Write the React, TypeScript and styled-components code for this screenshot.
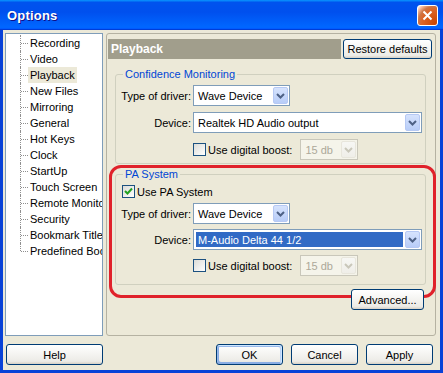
import * as React from 'react';
import styled, { createGlobalStyle } from 'styled-components';

const Global = createGlobalStyle`
  html, body {
    margin: 0;
    padding: 0;
    background: #fff;
  }
  body {
    font-family: "Liberation Sans", Arial, sans-serif;
    font-size: 11px;
    color: #000;
  }
`;

const Window = styled.div`
  width: 443px;
  height: 373px;
  display: flex;
  flex-direction: column;
  overflow: hidden;
`;

const TitleBar = styled.div`
  height: 30px;
  flex: none;
  display: flex;
  align-items: center;
  justify-content: space-between;
  padding: 0 5px 0 7px;
  box-sizing: border-box;
  background: linear-gradient(
    180deg,
    #0997ff,
    #0053ee 8%,
    #0050ee 40%,
    #0066ff 88%,
    #0066ff 93%,
    #005bff 95%,
    #003dd7 96%,
    #003dd7
  );
`;

const Title = styled.span`
  font-size: 13px;
  font-weight: bold;
  color: #fff;
  text-shadow: 1px 1px #0f1089;
  letter-spacing: 0.2px;
`;

const CloseButton = styled.div`
  width: 21px;
  height: 21px;
  box-sizing: border-box;
  border: 1px solid #fff;
  border-radius: 3px;
  display: flex;
  align-items: center;
  justify-content: center;
  background: radial-gradient(
    circle at 90% 90%,
    #cc4600 0,
    #dc6527 55%,
    #cd7546 70%,
    #ffccb2 90%,
    #fff 100%
  );
`;

const Frame = styled.div`
  flex: 1;
  display: flex;
  flex-direction: column;
  background: #ece9d8;
  border: 3px solid #0842d8;
  border-top: none;
`;

const MainRow = styled.div`
  display: flex;
  gap: 3px;
  height: 303px;
  padding: 3px 4px 0 2px;
`;

const Tree = styled.ul`
  width: 98px;
  box-sizing: border-box;
  margin: 0;
  padding: 1px 0 0 14px;
  list-style: none;
  background: #fff;
  border: 1px solid #7f9db9;
  overflow: hidden;
`;

const TreeItem = styled.li<{ $last?: boolean }>`
  position: relative;
  height: 16px;
  display: flex;
  align-items: center;
  padding-left: 8px;
  white-space: nowrap;

  &::before {
    content: '';
    position: absolute;
    left: 1px;
    top: 8px;
    width: 7px;
    border-top: 1px dotted #8f8f8f;
  }

  &::after {
    content: '';
    position: absolute;
    left: 0;
    top: 0;
    height: ${p => (p.$last ? '8px' : '16px')};
    border-left: 1px dotted #8f8f8f;
  }
`;

const TreeLabel = styled.span<{ $active?: boolean }>`
  padding: 1px 2px;
  line-height: 14px;
  background: ${p => (p.$active ? '#ece9d8' : 'transparent')};
`;

const Panel = styled.div`
  position: relative;
  width: 330px;
  box-sizing: border-box;
  border: 1px solid #b5b2a2;
  border-radius: 3px;
  padding: 5px 3px 0 1px;
  display: flex;
  flex-direction: column;
`;

const HeaderRow = styled.div`
  display: flex;
  align-items: center;
  gap: 2px;
  height: 20px;
`;

const HeaderBar = styled.div`
  flex: 1;
  height: 20px;
  background: #a19e8c;
  color: #fff;
  font-weight: bold;
  font-size: 12px;
  display: flex;
  align-items: center;
  padding-left: 3px;
`;

const Button = styled.button<{ $w: number; $h?: number; $default?: boolean }>`
  position: relative;
  z-index: 1;
  width: ${p => p.$w}px;
  height: ${p => p.$h ?? 21}px;
  box-sizing: border-box;
  padding: 0;
  font-family: inherit;
  font-size: 11px;
  color: #000;
  border: 1px solid #003c74;
  border-radius: 3px;
  background: linear-gradient(180deg, #fff, #ecebe6 86%, #d6d0c5);
  box-shadow: ${p =>
    p.$default
      ? 'inset -1px 1px #cee7ff, inset 1px 2px #98b8ea, inset -2px 2px #bcd4f6, inset 1px -1px #89ade4, inset 2px -2px #89ade4'
      : 'none'};
`;

const Group = styled.fieldset<{ $top: number; $bottom: number }>`
  margin: ${p => p.$top}px 6px 0 7px;
  padding: 4px 1px ${p => p.$bottom}px 1px;
  border: 1px solid #d0d0bf;
  border-radius: 3px;
  min-width: 0;
`;

const Legend = styled.legend`
  margin-left: 6px;
  padding: 0 2px;
  line-height: 14px;
  color: #0046d5;
`;

const Form = styled.div<{ $gap: number }>`
  display: grid;
  grid-template-columns: 74px 1fr;
  column-gap: 2px;
  row-gap: ${p => p.$gap}px;
  align-items: center;
`;

const FieldLabel = styled.span`
  text-align: right;
  white-space: nowrap;
`;

const CheckRow = styled.div<{ $indent: number; $span?: boolean }>`
  display: flex;
  align-items: center;
  padding-left: ${p => p.$indent}px;
  grid-column: ${p => (p.$span ? '1 / 3' : 'auto')};
  height: ${p => (p.$span ? 13 : 21)}px;
`;

const CheckText = styled.span`
  margin-left: 2px;
  white-space: nowrap;
`;

const Box = styled.span`
  width: 13px;
  height: 13px;
  box-sizing: border-box;
  border: 1px solid #1c5180;
  background: linear-gradient(135deg, #dcdcd7, #fff);
  display: flex;
  align-items: center;
  justify-content: center;
  flex: none;
`;

const Combo = styled.div<{ $w: number; $disabled?: boolean }>`
  width: ${p => p.$w}px;
  height: 21px;
  box-sizing: border-box;
  padding: 1px;
  display: flex;
  border: 1px solid ${p => (p.$disabled ? '#c9c7ba' : '#7f9db9')};
  background: ${p => (p.$disabled ? '#f5f4ea' : '#fff')};
  margin-left: ${p => (p.$disabled ? 8 : 0)}px;
`;

const ComboText = styled.span<{ $selected?: boolean; $disabled?: boolean }>`
  flex: 1;
  display: flex;
  align-items: center;
  padding-left: 2px;
  margin: 1px 2px 1px 1px;
  white-space: nowrap;
  overflow: hidden;
  background: ${p => (p.$selected ? '#316ac5' : 'transparent')};
  color: ${p => (p.$selected ? '#fff' : p.$disabled ? '#aca899' : '#000')};
`;

const ComboArrow = styled.span<{ $disabled?: boolean }>`
  width: 15px;
  flex: none;
  border-radius: 2px;
  display: flex;
  align-items: center;
  justify-content: center;
  border: 1px solid ${p => (p.$disabled ? '#e8e6dc' : '#b6c9f4')};
  box-sizing: border-box;
  background: ${p =>
    p.$disabled
      ? 'linear-gradient(180deg, #f7f7f4, #efeee8)'
      : 'linear-gradient(180deg, #d6e3fd, #b8cdf8)'};
`;

const AdvancedRow = styled.div`
  display: flex;
  justify-content: flex-end;
  margin: 4px 8px 0 0;
`;

const Highlight = styled.div`
  position: absolute;
  left: 2px;
  top: 131px;
  width: 327px;
  height: 133px;
  box-sizing: border-box;
  border: 3px solid #e0222b;
  border-radius: 12px;
  pointer-events: none;
`;

const Footer = styled.div`
  display: flex;
  align-items: center;
  gap: 8px;
  margin-top: 8px;
  padding: 0 7px 0 3px;
`;

const Spacer = styled.div`
  flex: 1;
`;

const Chevron = ({ disabled }: { disabled?: boolean }) => (
  <svg width="9" height="6" viewBox="0 0 9 6">
    <path
      d="M1 1 L4.5 4.5 L8 1"
      fill="none"
      stroke={disabled ? '#c9c7ba' : '#4d6185'}
      strokeWidth="2"
    />
  </svg>
);

const Select = ({
  width,
  value,
  selected,
  disabled
}: {
  width: number;
  value: string;
  selected?: boolean;
  disabled?: boolean;
}) => (
  <Combo $w={width} $disabled={disabled}>
    <ComboText $selected={selected} $disabled={disabled}>
      {value}
    </ComboText>
    <ComboArrow $disabled={disabled}>
      <Chevron disabled={disabled} />
    </ComboArrow>
  </Combo>
);

const Checkbox = ({ checked }: { checked?: boolean }) => (
  <Box>
    {checked && (
      <svg width="9" height="9" viewBox="0 0 9 9">
        <path d="M1 4 L3.5 6.5 L8 1.5" fill="none" stroke="#21a121" strokeWidth="2" />
      </svg>
    )}
  </Box>
);

const treeItems = [
  'Recording',
  'Video',
  'Playback',
  'New Files',
  'Mirroring',
  'General',
  'Hot Keys',
  'Clock',
  'StartUp',
  'Touch Screen',
  'Remote Monitor',
  'Security',
  'Bookmark Title',
  'Predefined Bookmarks'
];

const BoostRow = () => (
  <CheckRow $indent={0} style={{ gridColumn: 2 }}>
    <Checkbox />
    <CheckText>Use digital boost:</CheckText>
    <Select width={58} value="15 db" disabled={true} />
  </CheckRow>
);

export default function App() {
  return (
    <Window>
      <Global />
      <TitleBar>
        <Title>Options</Title>
        <CloseButton>
          <svg width="11" height="11" viewBox="0 0 11 11">
            <path d="M1.5 1.5 L9.5 9.5 M9.5 1.5 L1.5 9.5" stroke="#fff" strokeWidth="2" />
          </svg>
        </CloseButton>
      </TitleBar>
      <Frame>
        <MainRow>
          <Tree>
            {treeItems.map((item, i) => (
              <TreeItem key={item} $last={i === treeItems.length - 1}>
                <TreeLabel $active={item === 'Playback'}>{item}</TreeLabel>
              </TreeItem>
            ))}
          </Tree>
          <Panel>
            <HeaderRow>
              <HeaderBar>Playback</HeaderBar>
              <Button $w={89} $h={20}>Restore defaults</Button>
            </HeaderRow>

            <Group $top={8} $bottom={3}>
              <Legend>Confidence Monitoring</Legend>
              <Form $gap={6}>
                <FieldLabel>Type of driver:</FieldLabel>
                <Select width={97} value="Wave Device" />
                <FieldLabel>Device:</FieldLabel>
                <Select width={229} value="Realtek HD Audio output" />
                <BoostRow />
              </Form>
            </Group>

            <Group $top={3} $bottom={8}>
              <Legend>PA System</Legend>
              <Form $gap={5}>
                <CheckRow $indent={5} $span={true}>
                  <Checkbox checked={true} />
                  <CheckText>Use PA System</CheckText>
                </CheckRow>
                <FieldLabel>Type of driver:</FieldLabel>
                <Select width={97} value="Wave Device" />
                <FieldLabel>Device:</FieldLabel>
                <Select width={229} value="M-Audio Delta 44 1/2" selected={true} />
                <BoostRow />
              </Form>
            </Group>

            <AdvancedRow>
              <Button $w={73}>Advanced...</Button>
            </AdvancedRow>

            <Highlight />
          </Panel>
        </MainRow>
        <Footer>
          <Button $w={97}>Help</Button>
          <Spacer />
          <Button $w={67} $default={true}>OK</Button>
          <Button $w={67}>Cancel</Button>
          <Button $w={67}>Apply</Button>
        </Footer>
      </Frame>
    </Window>
  );
}
